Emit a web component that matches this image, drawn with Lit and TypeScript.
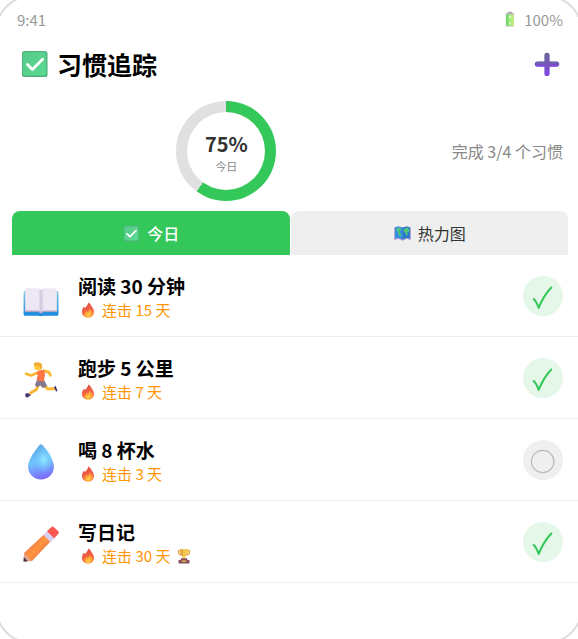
import { LitElement, html, css, svg } from "lit";
import { customElement, property, state } from "lit/decorators.js";
import { classMap } from "lit/directives/class-map.js";

type IconName =
  | "check" | "plus" | "battery" | "map" | "book" | "runner"
  | "drop" | "pencil" | "fire" | "trophy" | "tick" | "ring";

const shapes: Record<IconName, unknown> = {
  check: svg`
    <defs><linearGradient id="g" x1="0" y1="0" x2="1" y2="1"><stop offset="0" stop-color="#57c98a"/><stop offset="1" stop-color="#5adb92"/></linearGradient></defs>
    <rect x="3" y="3" width="25.500" height="26" rx="2.600" fill="#4fb07c"/>
    <rect x="3.800" y="4" width="23.400" height="23.600" rx="2" fill="url(#g)"/>
    <path d="M8.500 16.500L13.400 21.400L23.600 11.200" fill="none" stroke="#fff" stroke-width="2.800" stroke-linecap="round" stroke-linejoin="round"/>`,
  plus: svg`
    <defs><linearGradient id="g" x1="0" y1="0" x2="0" y2="1"><stop offset="0" stop-color="#6f6499"/><stop offset=".5" stop-color="#7653bb"/><stop offset="1" stop-color="#7e4be8"/></linearGradient></defs>
    <path d="M13 5.500a3 2.500 0 0 1 6 0V13H27a3 3 0 0 1 0 6H19V27a3 2.800 0 0 1-6 0V19H5a3 3 0 0 1 0-6H13z" fill="url(#g)"/>
    <path d="M4.500 14.300H13.700M19 14.300H27.500M14.400 5V13.500" stroke="#6869a8" stroke-width="1.600" fill="none"/>
    <path d="M4.500 18.200H13.700M19 18.200H27.500" stroke="#8a4cf0" stroke-width="1.500" fill="none"/>`,
  battery: svg`
    <defs><linearGradient id="g" x1="0" x2="1"><stop offset="0" stop-color="#68cf6b"/><stop offset=".5" stop-color="#a5f27e"/><stop offset="1" stop-color="#c4e97d"/></linearGradient></defs>
    <rect x="12" y="1.500" width="8" height="4" rx="1" fill="#aaa6ad"/>
    <rect x="8" y="3.500" width="16" height="27.500" rx="1.500" fill="#bbb4bd"/>
    <rect x="8" y="7" width="16" height="22.500" fill="url(#g)"/>
    <path d="M14.500 12h3M16 10.500v3M14.500 24h3" stroke="#fff" stroke-width="2"/>`,
  map: svg`
    <path d="M2 6L9 4L16 6L23 4L30 6V27L23 25L16 28L9 25L2 27z" fill="#a99bd0"/>
    <path d="M3.500 5.500L9 4L16 6V26L9 23L3.500 25z" fill="#348ee0"/>
    <path d="M16 6L23 4L28.500 5.500V25L23 23L16 26z" fill="#2878c8"/>
    <path d="M5 8l6-2 3 3-3 3 1 3 2 3-2 4-3-5-2-5zM18 9l5-3 4 2v5l-3 1 1 4-3 2-1-5-3-2z" fill="#4fc47b"/>`,
  book: svg`
    <defs><linearGradient id="g" x1="0" y1="0" x2="0" y2="1"><stop offset="0" stop-color="#8ccbed"/><stop offset="1" stop-color="#1687dc"/></linearGradient></defs>
    <g transform="translate(-1.700 1.900) scale(1.107 1.090)">
      <path d="M2 8.500a1.500 1.500 0 0 1 1.500-1.500H28.500a1.500 1.500 0 0 1 1.500 1.500V26a1.500 1.500 0 0 1-1.500 1.500H17.600a2 1.500 0 0 1-3.200 0H3.500A1.500 1.500 0 0 1 2 26z" fill="url(#g)"/>
      <path d="M3 24.300H14L16 25.700L18 24.300H29V22H3z" fill="#b2a5c6"/>
      <path d="M3.300 7Q3.300 5 5 5H13.500Q15.500 5 16 6.500Q16.500 5 18.500 5H27Q28.700 5 28.700 7V23.200H18.500Q16.500 23.200 16 24.600Q15.500 23.200 13.500 23.200H3.300z" fill="#eee8f5"/>
      <path d="M16 6.500V24.600" stroke="#cdc2db" stroke-width="1.200"/>
      <path d="M14.700 6V23.200M17.300 6V23.200" stroke="#e0d7ea" stroke-width="1"/>
    </g>`,
  runner: svg`
    <path d="M13 9.500L7 12L2.700 10.400" fill="none" stroke="#fdb62f" stroke-width="2.300" stroke-linecap="round" stroke-linejoin="round"/>
    <path d="M18.500 7.800L23 9L24.300 11.800" fill="none" stroke="#fdb62f" stroke-width="2.500" stroke-linecap="round" stroke-linejoin="round"/>
    <path d="M13.500 20L12 24.500L5.800 28" fill="none" stroke="#fcb42f" stroke-width="2.600" stroke-linejoin="round"/>
    <path d="M18 20.500L22 24L28.500 23.600" fill="none" stroke="#fdb932" stroke-width="2.600" stroke-linejoin="round"/>
    <path d="M2 28.300L4 27.500L7.300 29.300L4 31.500L2.200 31zM27.500 22.500L29 21L30.700 25.500L29.500 26.500z" fill="#493778"/>
    <path d="M12.500 16L19 16.500L21.500 21.500L17.600 23L15.600 20.800L12.500 22.500L10.500 20.500z" fill="#85778e"/>
    <path d="M12 9Q15 6.500 19 7.500L19.600 12L18.400 17.300L12 16.300L13 12z" fill="#ff7544"/>
    <circle cx="13.300" cy="4" r="3.400" fill="#ffc839"/>
    <path d="M9.600 2.800Q9.600-.2 13 .4Q17.500-.2 17 5L15.800 7L14.500 3.500z" fill="#f2a92f"/>`,
  drop: svg`
    <defs>
      <linearGradient id="g" x1=".3" y1="0" x2=".5" y2="1"><stop offset="0" stop-color="#5ca9e6"/><stop offset=".5" stop-color="#70c4fc"/><stop offset="1" stop-color="#7b67fb"/></linearGradient>
      <radialGradient id="s"><stop offset="0" stop-color="#8ceaff"/><stop offset="1" stop-color="#79ceff" stop-opacity="0"/></radialGradient>
    </defs>
    <path d="M14.600 .8Q16-.2 17.400 .8C21 5.500 27.500 13.500 27.500 20.200A11.500 11.300 0 0 1 4.500 20.200C4.500 13.500 11 5.500 14.600 .8z" fill="url(#g)"/>
    <ellipse cx="18.500" cy="14" rx="8" ry="12" fill="url(#s)"/>`,
  pencil: svg`
    <defs><linearGradient id="g" x1="0" y1="0" x2="1" y2="1"><stop offset=".25" stop-color="#ee7350"/><stop offset=".5" stop-color="#ff953e"/><stop offset=".8" stop-color="#e86b42"/></linearGradient></defs>
    <path d="M.500 31.500L1 24L19 7L25 13L8 31z" fill="url(#g)"/>
    <path d="M.500 31.500L1 24L8 31z" fill="#dfa68b"/>
    <path d="M.500 31.500L.800 27.800L4.200 31.300z" fill="#43304f"/>
    <path d="M18 8L22 4L28.500 10.500L24.500 14.500z" fill="#d8cff0"/>
    <path d="M21.300 4.700L25 1Q26.300 0 27.500 1L31.200 4.500Q32.500 6 31.200 7.200L27.800 10.800z" fill="#fc5750"/>`,
  fire: svg`
    <defs><linearGradient id="g" x1=".3" y1="0" x2=".6" y2="1"><stop offset="0" stop-color="#d84d45"/><stop offset=".65" stop-color="#fa6544"/><stop offset="1" stop-color="#ff9833"/></linearGradient></defs>
    <path d="M17 1C21 3.500 22 6.500 23.500 9C26 12.500 28 15.500 28 20C28 27 23 31 16 31C9 31 4 26.500 4 20C4 15 5.500 12.500 8 9.500L10 12C13 9 15 6 17 1z" fill="url(#g)"/>
    <path d="M20 13C21 17.500 25 18 24.500 23.500C24 28 20 30.500 16 30.500C11.500 30.500 8.500 28 9 24C9.500 20.500 12 20 13 17L15 19.500C17 18 19 16 20 13z" fill="#ffa436"/>
    <path d="M18 19.500C22 23 22 29.500 16 29.500C12 29 11 25 14 23L15 24.500Q17 22.500 18 19.500z" fill="#ffc848"/>`,
  trophy: svg`
    <path d="M9 5H5Q4 13 11 14.500M23 5H27Q28 13 21 14.500" fill="none" stroke="#e0a445" stroke-width="2.500"/>
    <path d="M8 2H24V9Q23.500 15 18.500 17L18 22H14L13.500 17Q8.500 15 8 9z" fill="#f3c650"/>
    <path d="M8.500 3H14V18Q8.500 14 8.500 3z" fill="#e0a445"/>
    <path d="M10 20.500H22L23 24H27V31H5V24H9z" fill="#8b525c"/>
    <rect x="12" y="25" width="8" height="3" fill="#e9af53"/>`,
  tick: svg`<path d="M6.700 19Q9.500 21.500 11.700 28Q16.500 15.500 24.300 7.500" fill="none" stroke="#34c759" stroke-width="2" stroke-linecap="round" stroke-linejoin="round"/>`,
  ring: svg`<circle cx="15.700" cy="17.500" r="11.200" fill="none" stroke="#b9b9b9" stroke-width="1.200"/>`,
};

@customElement("habit-icon")
export class HabitIcon extends LitElement {
  @property() name: IconName = "check";

  static styles = css`
    :host { display: inline-flex; flex: none; }
    .glyph { width: 100%; height: 100%; display: block; }
  `;

  render() {
    return html`<svg class="glyph" viewBox="0 0 32 32" aria-hidden="true">${shapes[this.name]}</svg>`;
  }
}

interface Habit {
  icon: IconName;
  name: string;
  streak: number;
  done: boolean;
  trophy?: boolean;
}

@customElement("app-root")
export class AppRoot extends LitElement {
  @state() private tab = 0;
  @state() private habits: Habit[] = [
    { icon: "book", name: "阅读 30 分钟", streak: 15, done: true },
    { icon: "runner", name: "跑步 5 公里", streak: 7, done: true },
    { icon: "drop", name: "喝 8 杯水", streak: 3, done: false },
    { icon: "pencil", name: "写日记", streak: 30, done: true, trophy: true },
  ];

  static styles = css`
    :host {
      display: block;
      min-height: 100vh;
      position: relative;
      overflow: hidden;
      background: #fff;
      color: #000;
      font-family: "Noto Sans CJK SC", sans-serif;
      font-size: 16px;
    }
    button { font: inherit; border: 0; padding: 0; cursor: pointer; }
    .frame {
      position: absolute;
      inset: -5px;
      border: 2px solid #ddd;
      border-radius: 37px;
      pointer-events: none;
    }
    .status {
      display: flex;
      justify-content: space-between;
      align-items: center;
      height: 38px;
      padding: 0 15px 0 17px;
      font-size: 15px;
      color: #999;
    }
    .battery { display: flex; align-items: center; gap: 6px; }
    .battery habit-icon { width: 16px; height: 16px; }
    .header {
      display: flex;
      justify-content: space-between;
      align-items: center;
      height: 52px;
      padding: 0 15px;
    }
    .title {
      display: flex;
      align-items: center;
      gap: 6px;
      margin: 0;
      font-size: 25px;
      line-height: 36px;
      font-weight: 700;
    }
    .title habit-icon { width: 32px; height: 32px; margin-left: 4px; }
    .add { display: flex; background: none; margin-right: 2px; }
    .add habit-icon { width: 28px; height: 28px; }
    .summary {
      display: flex;
      align-items: center;
      justify-content: space-between;
      gap: 14px;
      padding: 11px 15px 10px;
      color: #888;
    }
    .dial {
      display: grid;
      place-items: center;
      width: 100px;
      height: 100px;
      margin: 0 auto;
      border-radius: 50%;
      background: conic-gradient(#34c759 0 60%, #e0e0e0 60%);
    }
    .core {
      display: flex;
      flex-direction: column;
      align-items: center;
      justify-content: center;
      width: 78px;
      height: 78px;
      border-radius: 50%;
      background: #fff;
    }
    .percent { font-size: 20px; line-height: 29px; font-weight: 700; color: #333; }
    .caption { font-size: 11px; line-height: 16px; }
    .tabs { display: flex; gap: 1px; padding: 0 10px 0 12px; }
    .tab {
      flex: 1;
      display: flex;
      align-items: center;
      justify-content: center;
      gap: 6px;
      height: 44px;
      border-radius: 8px 8px 0 0;
      background: #efefef;
      color: #333;
    }
    .tab.active { background: #34c759; color: #fff; font-weight: 500; }
    .tab habit-icon { width: 19px; height: 19px; }
    .list { list-style: none; margin: 0; padding: 0; }
    .row {
      display: flex;
      align-items: center;
      padding: 14px 15px;
      border-bottom: 1px solid #eee;
    }
    .picture { width: 36px; height: 36px; margin: 5px 19px 0 8px; }
    .info { flex: 1; padding-top: 5px; }
    .name { margin: 0; font-size: 19px; line-height: 24px; font-weight: 700; }
    .streak {
      display: flex;
      align-items: center;
      gap: 6px;
      margin: 0;
      font-size: 15px;
      line-height: 24px;
      color: #ff9500;
    }
    .streak habit-icon { width: 16px; height: 16px; }
    .flame { margin-left: 2px; }
    .toggle {
      display: grid;
      place-items: center;
      width: 40px;
      height: 40px;
      border-radius: 50%;
      background: #efefef;
    }
    .toggle.done { background: #e5f7e9; }
    .toggle habit-icon { width: 32px; height: 32px; }
  `;

  private toggle(index: number) {
    this.habits = this.habits.map((h, i) => (i === index ? { ...h, done: !h.done } : h));
  }

  private renderTab(index: number, icon: IconName, label: string) {
    const active = this.tab === index;
    return html`<button
      class=${classMap({ tab: true, active })}
      role="tab"
      aria-selected=${active ? "true" : "false"}
      @click=${() => (this.tab = index)}
    ><habit-icon name=${icon}></habit-icon><span>${label}</span></button>`;
  }

  private renderHabit(habit: Habit, index: number) {
    return html`<li class="row">
      <habit-icon class="picture" name=${habit.icon}></habit-icon>
      <div class="info">
        <h2 class="name">${habit.name}</h2>
        <p class="streak">
          <habit-icon class="flame" name="fire"></habit-icon>
          <span>连击 ${habit.streak} 天</span>
          ${habit.trophy ? html`<habit-icon name="trophy"></habit-icon>` : ""}
        </p>
      </div>
      <button
        class=${classMap({ toggle: true, done: habit.done })}
        aria-label=${habit.name}
        aria-pressed=${habit.done ? "true" : "false"}
        @click=${() => this.toggle(index)}
      ><habit-icon name=${habit.done ? "tick" : "ring"}></habit-icon></button>
    </li>`;
  }

  render() {
    const done = this.habits.filter((h) => h.done).length;
    const total = this.habits.length;
    return html`
      <div class="status">
        <span>9:41</span>
        <span class="battery"><habit-icon name="battery"></habit-icon>100%</span>
      </div>
      <header class="header">
        <h1 class="title"><habit-icon name="check"></habit-icon>习惯追踪</h1>
        <button class="add" aria-label="添加"><habit-icon name="plus"></habit-icon></button>
      </header>
      <section class="summary">
        <div class="dial">
          <div class="core">
            <span class="percent">${Math.round((done / total) * 100)}%</span>
            <span class="caption">今日</span>
          </div>
        </div>
        <span>完成 ${done}/${total} 个习惯</span>
      </section>
      <div class="tabs" role="tablist">
        ${this.renderTab(0, "check", "今日")}${this.renderTab(1, "map", "热力图")}
      </div>
      <ul class="list">${this.habits.map((h, i) => this.renderHabit(h, i))}</ul>
      <div class="frame"></div>
    `;
  }
}
